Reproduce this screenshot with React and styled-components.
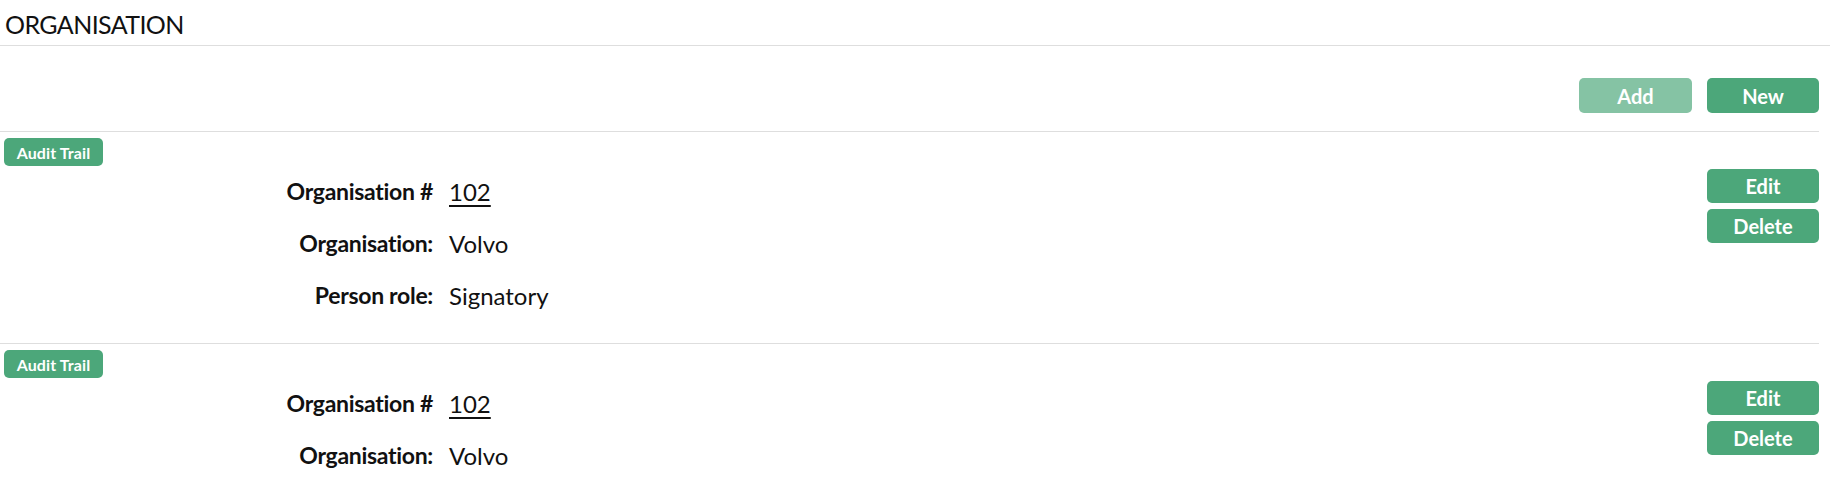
import React from "react";
import styled, { createGlobalStyle } from "styled-components";

const GlobalStyle = createGlobalStyle`
  html, body { margin: 0; padding: 0; background: #fff; }
  body { font-family: "Lato", "Liberation Sans", sans-serif; color: #111; }
`;

const Page = styled.div`
  width: 1830px;
`;

const Header = styled.div`
  height: 46px;
  border-bottom: 1px solid #dedede;
  padding-left: 5px;
  box-sizing: border-box;
`;

const Title = styled.h1`
  margin: 0;
  padding-top: 8px;
  font-size: 25px;
  line-height: 32px;
  font-weight: 400;
  letter-spacing: -0.6px;
`;

const Content = styled.div`
  padding-right: 11px;
`;

const Toolbar = styled.div`
  display: flex;
  justify-content: flex-end;
  gap: 15px;
  padding-top: 32px;
  padding-bottom: 18px;
  border-bottom: 1px solid #dedede;
`;

const Button = styled.button`
  font-family: inherit;
  border: none;
  border-radius: 5px;
  background: #4ca77a;
  color: #fff;
  font-weight: 700;
  font-size: 20px;
  width: ${(p) => p.$w || 112}px;
  height: ${(p) => p.$h || 35}px;
  padding: 0;
  cursor: pointer;
  opacity: ${(p) => (p.disabled ? 0.68 : 1)};
`;

const Record = styled.div`
  padding-top: 6px;
  padding-bottom: 21px;
  border-bottom: 1px solid #dedede;
`;

const Badge = styled.div`
  display: flex;
  align-items: center;
  justify-content: center;
  margin-left: 4px;
  width: 99px;
  height: 28px;
  border-radius: 5px;
  background: #4ca77a;
  color: #fff;
  font-weight: 700;
  font-size: 16px;
  letter-spacing: 0.1px;
`;

const Body = styled.div`
  display: flex;
  justify-content: space-between;
  align-items: flex-start;
`;

const Fields = styled.dl`
  margin: 0;
  display: grid;
  grid-template-columns: 433px auto;
  column-gap: 16px;
  grid-auto-rows: 52px;
  align-items: center;
  font-size: 24px;
  line-height: 1.2;
`;

const Label = styled.dt`
  text-align: right;
  font-weight: 700;
  font-size: 23px;
  letter-spacing: -0.3px;
`;

const Value = styled.dd`
  margin: 0;
  text-decoration: ${(p) => (p.$link ? "underline" : "none")};
  text-decoration-thickness: 2px;
  text-underline-offset: 4px;
`;

const Actions = styled.div`
  display: flex;
  flex-direction: column;
  gap: 6px;
  padding-top: 3px;
`;

const records = [
  { id: 102, org: "Volvo", role: "Signatory" },
  { id: 102, org: "Volvo", role: "Signatory" },
];

export default function App() {
  return (
    <Page>
      <GlobalStyle />
      <Header>
        <Title>ORGANISATION</Title>
      </Header>
      <Content>
        <Toolbar>
          <Button $w={113} disabled>Add</Button>
          <Button>New</Button>
        </Toolbar>
        {records.map((r, i) => (
          <Record key={i}>
            <Badge>Audit Trail</Badge>
            <Body>
              <Fields>
                <Label>Organisation #</Label>
                <Value $link>{r.id}</Value>
                <Label>Organisation:</Label>
                <Value>{r.org}</Value>
                <Label>Person role:</Label>
                <Value>{r.role}</Value>
              </Fields>
              <Actions>
                <Button $h={34}>Edit</Button>
                <Button $h={34}>Delete</Button>
              </Actions>
            </Body>
          </Record>
        ))}
      </Content>
    </Page>
  );
}
